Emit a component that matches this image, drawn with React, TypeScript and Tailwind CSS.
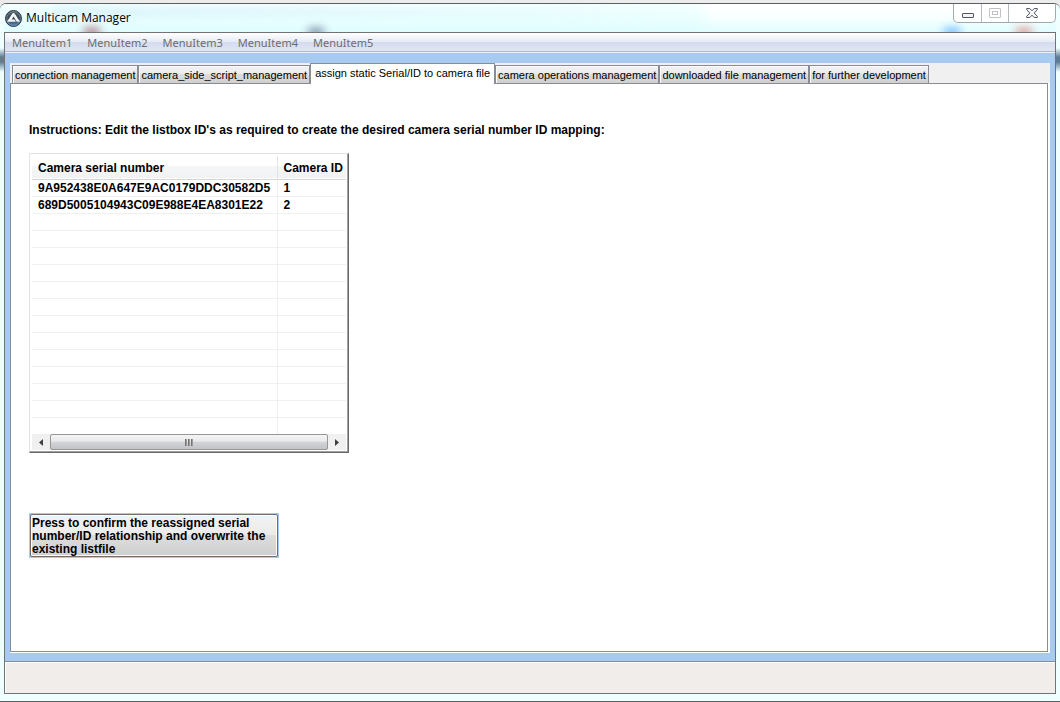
import { useState } from "react";

const MENU_ITEMS = ["MenuItem1", "MenuItem2", "MenuItem3", "MenuItem4", "MenuItem5"];

const TABS = [
  "connection management",
  "camera_side_script_management",
  "assign static Serial/ID to camera file",
  "camera operations management",
  "downloaded file management",
  "for further development",
];

const CAMERAS = [
  { serial: "9A952438E0A647E9AC0179DDC30582D5", id: "1" },
  { serial: "689D5005104943C09E988E4EA8301E22", id: "2" },
];

const ROW_COUNT = 15;

function AppIcon() {
  return (
    <svg width="17" height="17" viewBox="0 0 17 17" aria-hidden="true">
      <defs>
        <linearGradient id="disc" x1="0" y1="0" x2="0" y2="1">
          <stop offset="0" stopColor="#5b6468" />
          <stop offset="0.5" stopColor="#354552" />
          <stop offset="1" stopColor="#4d86bd" />
        </linearGradient>
      </defs>
      <circle cx="8.5" cy="8.5" r="8" fill="url(#disc)" stroke="#2c3d4d" />
      <circle cx="8.5" cy="8.5" r="6.8" fill="none" stroke="#8297a8" strokeWidth="0.7" />
      <path d="M2 11.8 7.2 3.8q1.3-1.4 2.6 0L15 11.8h-3.2L8.5 6.6 6.8 9.6h2.8l1.2 2.2z" fill="#f4f4f4" />
    </svg>
  );
}

function MinimizeIcon() {
  return (
    <svg width="12" height="5" viewBox="0 0 12 5" aria-hidden="true">
      <rect x="0.5" y="0.5" width="11" height="4" rx="0.5" fill="#f4f4f4" stroke="#535666" />
    </svg>
  );
}

function MaximizeIcon() {
  return (
    <svg width="12" height="10" viewBox="0 0 12 10" fill="none" stroke="#bfc1c4" aria-hidden="true">
      <rect x="0.5" y="0.5" width="11" height="9" rx="0.5" />
      <rect x="3.5" y="3.5" width="5" height="3" />
    </svg>
  );
}

function CloseIcon() {
  return (
    <svg width="12" height="10" viewBox="0 0 12 10" aria-hidden="true">
      <path
        d="M.7.5h3.1L6 2.8 8.2.5h3.1v1.2L8.2 5l3.1 3.3v1.2H8.2L6 7.2 3.8 9.5H.7V8.3L3.8 5 .7 1.7z"
        fill="#f4f4f4"
        stroke="#535666"
      />
    </svg>
  );
}

function TitleBar() {
  return (
    <header className="relative flex h-7 shrink-0 items-start justify-between overflow-hidden bg-linear-to-b from-[#f4ffff] via-[#eaffff] to-[#dffdff]">
      {/* glass reflections of whatever is behind the window */}
      <div className="absolute top-1 left-12 h-2 w-160 bg-linear-to-r from-[#b9e2f4] to-transparent opacity-50 blur-xs" />
      <div className="absolute top-6 left-20 h-2 w-4 bg-[#a04050] opacity-70 blur-xs" />
      <div className="absolute top-6 left-76 h-2 w-4 bg-[#506080] opacity-70 blur-xs" />
      <div className="absolute -top-4 right-0 h-8 w-88 bg-white blur-sm" />
      <div className="absolute top-6 right-24 h-2 w-4 bg-[#3f9cff] opacity-70 blur-xs" />
      <div className="absolute top-6 right-6 h-2 w-4 bg-[#e07060] opacity-70 blur-xs" />
      <div className="relative flex items-center gap-1 pt-1 pl-px">
        <AppIcon />
        <h1 className="font-['Open_Sans','Noto_Sans',sans-serif] text-[12px] leading-5 text-black">
          Multicam Manager
        </h1>
      </div>
      <div className="relative flex h-[19px] rounded-b-[5px] border border-t-0 border-[#a3aaac] bg-white">
        <button aria-label="Minimize" className="flex w-7 items-center justify-center border-r border-[#b5babc] pt-1">
          <MinimizeIcon />
        </button>
        <button aria-label="Maximize" disabled className="flex w-[27px] items-center justify-center border-r border-[#b5babc]">
          <MaximizeIcon />
        </button>
        <button aria-label="Close" className="flex w-[46px] items-center justify-center">
          <CloseIcon />
        </button>
      </div>
    </header>
  );
}

function MenuBar() {
  return (
    <nav className="flex h-5 shrink-0 items-center gap-[15px] border-b border-[#f0f0f0] bg-[linear-gradient(#fff,#e6ebf5_45%,#d4dbed_46%,#e0e5f4_94%,#b4b8c4_95%)] px-[7px]">
      {MENU_ITEMS.map((item) => (
        <button
          key={item}
          disabled
          className="font-['Noto_Sans','Open_Sans',sans-serif] text-[11px] leading-4 text-[#6d6d6d]"
        >
          {item}
        </button>
      ))}
    </nav>
  );
}

function CameraList() {
  return (
    <div className="w-80 border border-t-[#e3e3e3] border-r-[#696969] border-b-[#696969] border-l-[#e3e3e3] p-[2px] shadow-[inset_-1px_-1px_#a0a0a0]">
      <table className="w-full table-fixed border-collapse">
        <thead>
          <tr className="h-[23px] border-b border-[#d5d5d5] bg-[linear-gradient(#fff_45%,#f5f6f8_46%,#f1f2f4)] text-left">
            <th className="w-[245px] border-r border-[#e2e3e6] px-[6px] pt-px">Camera serial number</th>
            <th className="px-[6px] pt-px whitespace-nowrap">Camera ID</th>
          </tr>
        </thead>
        <tbody>
          {Array.from({ length: ROW_COUNT }, (_, i) => (
            <tr key={i} className="h-[17px] border-b border-[#f0f0f0] last:border-b-0">
              <td className="border-r border-[#f0f0f0] pl-[6px]">{CAMERAS[i]?.serial}</td>
              <td className="px-[6px]">{CAMERAS[i]?.id}</td>
            </tr>
          ))}
        </tbody>
      </table>
      <div className="flex h-4 bg-[#f0f0f0]">
        <button aria-label="Scroll left" className="flex w-[18px] items-center justify-center">
          <svg width="4" height="7" viewBox="0 0 4 7" aria-hidden="true">
            <path d="M4 0v7L0 3.5z" fill="#404040" />
          </svg>
        </button>
        <div className="flex grow items-center justify-center gap-px rounded-xs border border-[#979797] bg-[linear-gradient(#f5f5f5,#e9e9eb_45%,#d3d4d7_50%,#c2c3c6)]">
          {[0, 1, 2].map((grip) => (
            <span key={grip} className="h-[7px] w-[2px] bg-linear-to-r from-[#606060] to-[#b0b0b0]" />
          ))}
        </div>
        <button aria-label="Scroll right" className="flex w-[18px] items-center justify-center">
          <svg width="4" height="7" viewBox="0 0 4 7" aria-hidden="true">
            <path d="M0 0v7l4-3.5z" fill="#404040" />
          </svg>
        </button>
      </div>
    </div>
  );
}

function AssignPanel() {
  return (
    <section className="flex flex-col items-start px-[18px] pt-[38px] text-[12px] leading-4 font-bold text-black">
      <p>Instructions: Edit the listbox ID's as required to create the desired camera serial number ID mapping:</p>
      <div className="mt-[15px]">
        <CameraList />
      </div>
      <button className="mt-[60px] w-[250px] border border-[#a6caf0] bg-[#a6caf0] text-left leading-[13px]">
        <span className="block rounded-xs border border-[#707070] bg-[linear-gradient(#f2f2f2,#ebebeb_48%,#dddddd_50%,#cfcfcf)] px-px pt-[2px] shadow-[inset_0_0_0_1px_#fcfcfc]">
          Press to confirm the reassigned serial number/ID relationship and overwrite the existing listfile
        </span>
      </button>
    </section>
  );
}

export default function App() {
  const [activeTab, setActiveTab] = useState<number>(2);

  return (
    <div className="flex h-screen flex-col bg-[#ececec] pt-[3px] font-['Liberation_Sans',Arial,sans-serif]">
      <div className="flex grow flex-col rounded-t-md border-t border-b border-[#5c6064] bg-[linear-gradient(#f0ffff_44px,#5f7c96_53px,#5f7c96_58px,#f0ffff_68px)] px-1 pb-[7px]">
        <TitleBar />
        <main className="flex grow flex-col border border-[#707274]">
          <MenuBar />
          <div className="flex grow flex-col bg-[#a6caf0] px-[5px] pt-[10px] pb-2">
            <div
              role="tablist"
              className="flex h-5 items-end bg-[#f0f0f0] pl-[2px] text-[11px] leading-4 whitespace-nowrap text-black"
            >
              {TABS.map((tab, i) => (
                <button
                  key={tab}
                  role="tab"
                  aria-selected={i === activeTab}
                  onClick={() => setActiveTab(i)}
                  className={
                    i === activeTab
                      ? "relative -mb-px h-[21px] border border-b-0 border-[#898c95] bg-white px-1 pb-[2px]"
                      : "h-[18px] border border-b-0 border-[#898c95] bg-[linear-gradient(#f2f2f2,#ebebeb_48%,#dddddd_50%,#cfcfcf)] px-[2px] shadow-[inset_1px_1px_#fcfcfc]"
                  }
                >
                  {tab}
                </button>
              ))}
            </div>
            <div className="flex grow flex-col border-r-2 border-b border-white">
              <div className="grow border border-[#898c95] bg-white">{activeTab === 2 && <AssignPanel />}</div>
            </div>
          </div>
          <footer className="h-8 border-t border-[#898c95] bg-[#f0edeb] shadow-[inset_1px_1px_#fff]" />
        </main>
      </div>
    </div>
  );
}
